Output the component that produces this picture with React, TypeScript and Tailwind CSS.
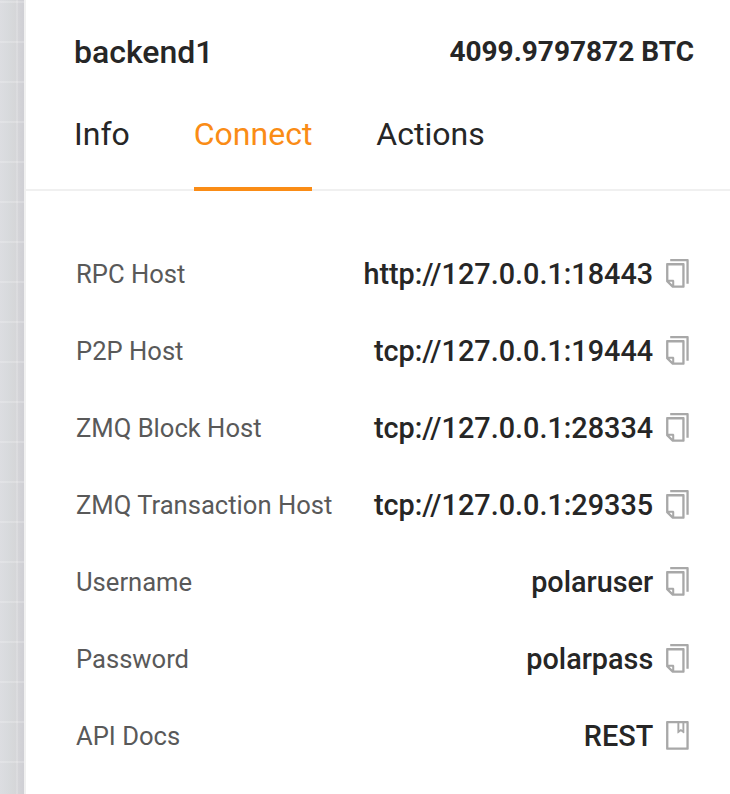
import React from 'react';

type Row = { label: string; value: string; icon: 'copy' | 'book' };

const rows: Row[] = [
  { label: 'RPC Host', value: 'http://127.0.0.1:18443', icon: 'copy' },
  { label: 'P2P Host', value: 'tcp://127.0.0.1:19444', icon: 'copy' },
  { label: 'ZMQ Block Host', value: 'tcp://127.0.0.1:28334', icon: 'copy' },
  { label: 'ZMQ Transaction Host', value: 'tcp://127.0.0.1:29335', icon: 'copy' },
  { label: 'Username', value: 'polaruser', icon: 'copy' },
  { label: 'Password', value: 'polarpass', icon: 'copy' },
  { label: 'API Docs', value: 'REST', icon: 'book' },
];

// Ant Design outlined "copy" and "book" glyphs
const CopyIcon = () => (
  <svg viewBox="64 64 896 896" className="-mt-0.5 size-[28.8px] shrink-0" fill="#a8a8a8">
    <path d="M832 64H296c-4.400 0-8 3.600-8 8v56c0 4.400 3.600 8 8 8h496v688c0 4.400 3.600 8 8 8h56c4.400 0 8-3.600 8-8V96c0-17.700-14.300-32-32-32zM704 192H192c-17.700 0-32 14.300-32 32v530.700c0 8.500 3.400 16.600 9.400 22.600l173.300 173.300c2.200 2.200 4.700 4 7.400 5.500v1.900h4.200c3.500 1.300 7.200 2 11 2H704c17.700 0 32-14.300 32-32V224c0-17.700-14.300-32-32-32zM350 856.200L263.900 770H350v86.200zM664 888H414V746c0-22.100-17.900-40-40-40H232V264h432v624z" />
  </svg>
);

const BookIcon = () => (
  <svg viewBox="64 64 896 896" className="-mt-0.5 size-[28.8px] shrink-0" fill="#a8a8a8">
    <path d="M832 64H192c-17.700 0-32 14.300-32 32v832c0 17.700 14.300 32 32 32h640c17.700 0 32-14.300 32-32V96c0-17.700-14.300-32-32-32zm-260 72h96v209.900L621.500 312 572 347.400V136zm220 752H232V136h280v296.900c0 3.300 1 6.600 3 9.300a15.900 15.900 0 0 0 22.300 3.700l83.800-59.900 81.400 59.400c2.700 2 6 3.100 9.400 3.100 8.800 0 16-7.200 16-16V136h64v752z" />
  </svg>
);

export default function App() {
  return (
    <div className="flex h-[794px] w-[730px] overflow-hidden bg-white font-[Roboto,sans-serif] text-[#262626]">
      <div className="w-6 shrink-0 bg-[image:repeating-linear-gradient(to_bottom,transparent_0_1px,#ffffff30_1px_3px,transparent_3px_40px),linear-gradient(to_right,transparent_16px,#ffffff28_16px_18px,transparent_18px),linear-gradient(to_right,#dcdde1,#d8dadd_8px,#d6d7d9_14px,#d4d4d8_18px,#cfcfd4)]" />
      <div className="flex min-w-0 flex-1 flex-col border-l-2 border-[#f0f0f0]">
        <header className="flex h-[102px] items-center justify-between pr-9 pl-12">
          <h1 className="pt-0.5 text-[32px] font-medium">backend1</h1>
          <span className="pt-px text-[28px] leading-[41px] font-bold">4099.9797872 BTC</span>
        </header>
        <nav className="flex h-[89px] gap-16 border-b-2 border-[#f0f0f0] pl-12 text-[32px]">
          <span className="pt-2">Info</span>
          <span className="-mb-0.5 border-b-4 border-[#fa8c16] pt-2 text-[#fa8c16]">Connect</span>
          <span className="pt-2">Actions</span>
        </nav>
        <dl className="flex flex-col pt-[45px] pr-[38px] pl-[50px]">
          {rows.map((r) => (
            <div key={r.label} className="flex h-[77px] items-center justify-between">
              <dt className="pb-px text-[25.6px] leading-[38px] text-[#595959]">{r.label}</dt>
              <dd className="flex items-center gap-2.5 text-[28.8px] leading-[43px] font-medium">
                <span>{r.value}</span>
                {r.icon === 'copy' ? <CopyIcon /> : <BookIcon />}
              </dd>
            </div>
          ))}
        </dl>
      </div>
    </div>
  );
}
